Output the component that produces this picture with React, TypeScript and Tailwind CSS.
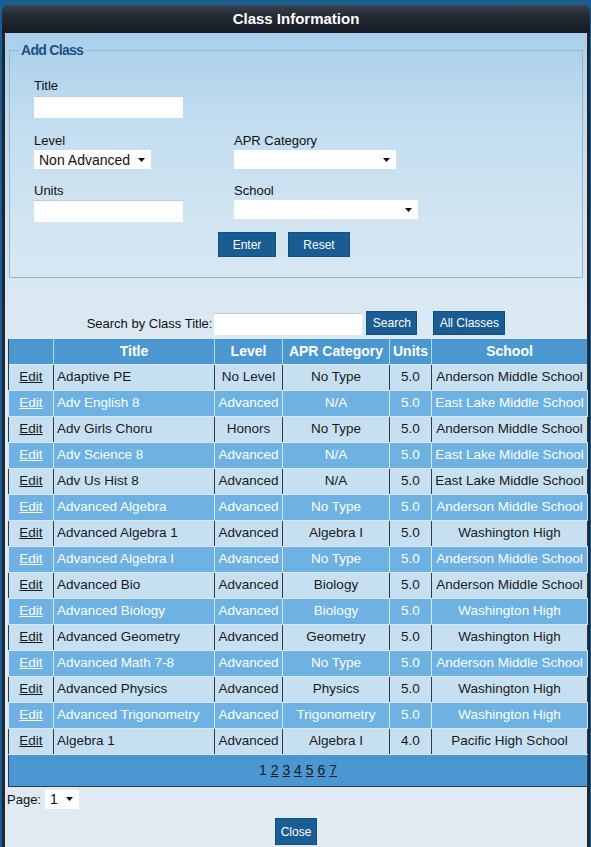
import React from 'react';

type ClassRow = {
  title: string;
  level: string;
  apr: string;
  units: string;
  school: string;
};

const rows: ClassRow[] = [
  { title: 'Adaptive PE', level: 'No Level', apr: 'No Type', units: '5.0', school: 'Anderson Middle School' },
  { title: 'Adv English 8', level: 'Advanced', apr: 'N/A', units: '5.0', school: 'East Lake Middle School' },
  { title: 'Adv Girls Choru', level: 'Honors', apr: 'No Type', units: '5.0', school: 'Anderson Middle School' },
  { title: 'Adv Science 8', level: 'Advanced', apr: 'N/A', units: '5.0', school: 'East Lake Middle School' },
  { title: 'Adv Us Hist 8', level: 'Advanced', apr: 'N/A', units: '5.0', school: 'East Lake Middle School' },
  { title: 'Advanced Algebra', level: 'Advanced', apr: 'No Type', units: '5.0', school: 'Anderson Middle School' },
  { title: 'Advanced Algebra 1', level: 'Advanced', apr: 'Algebra I', units: '5.0', school: 'Washington High' },
  { title: 'Advanced Algebra I', level: 'Advanced', apr: 'No Type', units: '5.0', school: 'Anderson Middle School' },
  { title: 'Advanced Bio', level: 'Advanced', apr: 'Biology', units: '5.0', school: 'Anderson Middle School' },
  { title: 'Advanced Biology', level: 'Advanced', apr: 'Biology', units: '5.0', school: 'Washington High' },
  { title: 'Advanced Geometry', level: 'Advanced', apr: 'Geometry', units: '5.0', school: 'Washington High' },
  { title: 'Advanced Math 7-8', level: 'Advanced', apr: 'No Type', units: '5.0', school: 'Anderson Middle School' },
  { title: 'Advanced Physics', level: 'Advanced', apr: 'Physics', units: '5.0', school: 'Washington High' },
  { title: 'Advanced Trigonometry', level: 'Advanced', apr: 'Trigonometry', units: '5.0', school: 'Washington High' },
  { title: 'Algebra 1', level: 'Advanced', apr: 'Algebra I', units: '4.0', school: 'Pacific High School' },
];

function Caret() {
  return (
    <svg width="7" height="4" viewBox="0 0 7 4" className="shrink-0">
      <path d="M0 0h7L3.5 4z" fill="#111" />
    </svg>
  );
}

function FakeSelect({ width, value }: { width: string; value?: string }) {
  return (
    <div
      className={`${width} h-[19px] bg-white flex items-center justify-between pl-[5px] pr-[6px] text-[14px] text-[#111]`}
    >
      <span className="leading-none">{value ?? ''}</span>
      <Caret />
    </div>
  );
}

function Btn({ label, className = '' }: { label: string; className?: string }) {
  return (
    <button
      className={`bg-[#1a5c94] border border-[#154d7c] text-white text-[12px] leading-none ${className}`}
    >
      {label}
    </button>
  );
}

export default function App() {
  return (
    <div
      className="w-[591px] h-[847px] overflow-hidden bg-[#1b5d92] pt-[5px] pl-[2px]"
      style={{ fontFamily: '"Liberation Sans", Arial, sans-serif' }}
    >
      <div className="w-[588px] h-[842px] rounded-t-[7px] bg-[#1e2731] flex flex-col overflow-hidden">
        {/* title bar */}
        <div className="h-[28px] shrink-0 flex items-center justify-center bg-[linear-gradient(180deg,#3a434e_0%,#222a34_40%,#151b23_100%)]">
          <span className="text-white font-bold text-[15px]">Class Information</span>
        </div>

        <div className="mx-[3px] flex-1 bg-[linear-gradient(180deg,#a9cfeb_0%,#c4def0_12%,#d8e8f3_30%,#dde9f2_45%,#dfeaf3_100%)] pt-[9px]">
          <fieldset className="ml-[4px] w-[574px] border border-[#9fb3c2] p-0">
            <legend className="ml-[9px] px-[2px] text-[14px] leading-[16px] font-bold tracking-[-0.7px] text-[#1b4f82]">
              Add Class
            </legend>
            <div className="pl-[24px] pt-[20px] pb-[20px] text-[13px] text-[#111]">
              <div className="leading-[15px]">Title</div>
              <input className="mt-[3px] w-[149px] h-[22px] bg-white border-t border-[#c2ccd4] outline-none" />

              <div className="mt-[15px] flex">
                <div className="w-[200px]">
                  <div className="leading-[15px]">Level</div>
                  <div className="mt-[2px]">
                    <FakeSelect width="w-[117px]" value="Non Advanced" />
                  </div>
                </div>
                <div>
                  <div className="leading-[15px]">APR Category</div>
                  <div className="mt-[2px]">
                    <FakeSelect width="w-[162px]" />
                  </div>
                </div>
              </div>

              <div className="mt-[14px] flex">
                <div className="w-[200px]">
                  <div className="leading-[15px]">Units</div>
                  <input className="mt-[2px] w-[149px] h-[22px] bg-white border-t border-[#c2ccd4] outline-none" />
                </div>
                <div>
                  <div className="leading-[15px]">School</div>
                  <div className="mt-[2px]">
                    <FakeSelect width="w-[184px]" />
                  </div>
                </div>
              </div>

              <div className="mt-[10px] ml-[184px] flex gap-[12px]">
                <Btn label="Enter" className="w-[58px] h-[25px]" />
                <Btn label="Reset" className="w-[62px] h-[25px]" />
              </div>
            </div>
          </fieldset>

          {/* search row */}
          <div className="mt-[33px] flex items-end justify-center text-[13px] text-[#111]">
            <span className="leading-[22px] mr-[2px]">Search by Class Title:</span>
            <input className="w-[148px] h-[22px] bg-white border-t border-[#c2ccd4] outline-none" />
            <Btn label="Search" className="ml-[4px] w-[51px] h-[24px]" />
            <Btn label="All Classes" className="ml-[16px] w-[72px] h-[24px]" />
          </div>

          {/* class table */}
          <table className="mt-[4px] ml-[3px] w-[579px] table-fixed border-collapse text-[13.5px]">
            <colgroup>
              <col className="w-[45px]" />
              <col className="w-[161px]" />
              <col className="w-[68px]" />
              <col className="w-[107px]" />
              <col className="w-[42px]" />
              <col className="w-[156px]" />
            </colgroup>
            <thead>
              <tr className="h-[25px] bg-[#4b97d1] text-white font-bold text-[14px]">
                <th className="border-l border-l-[#2f3c47] border-r border-r-[#bcd8ee]"></th>
                <th className="border-x border-[#bcd8ee]">Title</th>
                <th className="border-x border-[#bcd8ee]">Level</th>
                <th className="border-x border-[#bcd8ee]">APR Category</th>
                <th className="border-x border-[#bcd8ee]">Units</th>
                <th className="border-l border-l-[#bcd8ee] border-r border-r-[#2f3c47]">School</th>
              </tr>
            </thead>
            <tbody>
              {rows.map((row, i) => {
                const blue = i % 2 === 1;
                const cell = blue
                  ? 'border border-[#d6e8f5] whitespace-nowrap overflow-hidden'
                  : 'border border-x-[#2f3c47] border-y-[#d6e8f5] whitespace-nowrap overflow-hidden';
                return (
                  <tr
                    key={i}
                    className={`h-[26px] ${
                      blue ? 'bg-[#6eb1e3] text-white' : 'bg-[#c7e0f1] text-[#1a1a1a]'
                    } ${i === 0 ? 'border-t border-t-[#2f3c47]' : ''}`}
                  >
                    <td className={`${cell} text-center`}>
                      <a className="underline">Edit</a>
                    </td>
                    <td className={`${cell} pl-[3px] text-left`}>{row.title}</td>
                    <td className={`${cell} text-center`}>{row.level}</td>
                    <td className={`${cell} text-center`}>{row.apr}</td>
                    <td className={`${cell} text-center`}>{row.units}</td>
                    <td className={`${cell} text-center`}>{row.school}</td>
                  </tr>
                );
              })}
              <tr className="h-[32px] bg-[#4b97d1]">
                <td colSpan={6} className="border border-[#2f3c47] text-center text-[14px] text-[#1a1a1a]">
                  <span>1</span>{' '}
                  <a className="underline">2</a> <a className="underline">3</a>{' '}
                  <a className="underline">4</a> <a className="underline">5</a>{' '}
                  <a className="underline">6</a> <a className="underline">7</a>
                </td>
              </tr>
            </tbody>
          </table>

          {/* page picker */}
          <div className="mt-[3px] ml-[2px] flex items-center text-[13px] text-[#111]">
            <span className="mr-[4px]">Page:</span>
            <FakeSelect width="w-[34px]" value="1" />
          </div>

          <div className="mt-[9px] flex justify-center">
            <Btn label="Close" className="w-[42px] h-[27px]" />
          </div>
        </div>
      </div>
    </div>
  );
}
